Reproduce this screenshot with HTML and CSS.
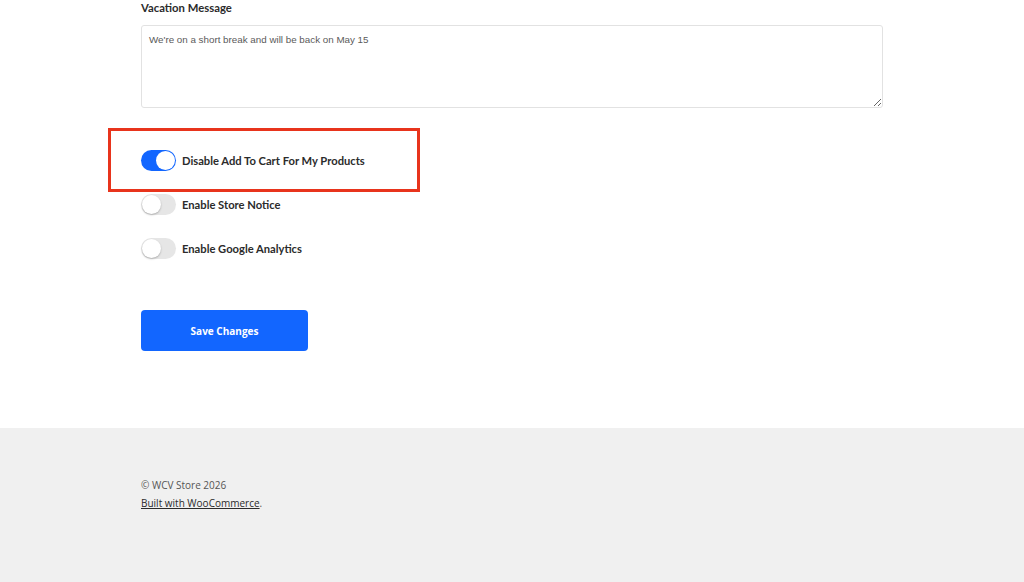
FILE: index.html
```html
<!DOCTYPE html>
<html lang="en">
<head>
  <meta charset="UTF-8">
  <meta name="viewport" content="width=device-width, initial-scale=1.0">
  <title>Store Settings</title>
  <link rel="stylesheet" href="styles.css">
</head>
<body>
  <main class="content">
    <form class="settings">
      <div class="field">
        <label for="vacationMessage">Vacation Message</label>
        <textarea id="vacationMessage">We're on a short break and will be back on May 15</textarea>
      </div>

      <div class="toggles">
        <div class="toggle-row highlighted">
          <label class="switch">
            <input type="checkbox" checked>
            <span class="slider"></span>
          </label>
          <span class="toggle-label">Disable Add To Cart For My Products</span>
          <span class="annotation"></span>
        </div>
        <div class="toggle-row">
          <label class="switch">
            <input type="checkbox">
            <span class="slider"></span>
          </label>
          <span class="toggle-label">Enable Store Notice</span>
        </div>
        <div class="toggle-row">
          <label class="switch">
            <input type="checkbox">
            <span class="slider"></span>
          </label>
          <span class="toggle-label">Enable Google Analytics</span>
        </div>
      </div>

      <button type="button" class="save-button">Save Changes</button>
    </form>
  </main>

  <footer class="site-footer">
    <p>&copy; WCV Store 2026</p>
    <p><a href="#">Built with WooCommerce</a>.</p>
  </footer>
</body>
</html>
```

FILE: styles.css
```css
:root {
  --text-color: #2b2b2b;
  --muted: #555;
  --border-color: #e2e2e2;
  --accent: #1266ff;
  --footer-bg: #f0f0f0;
  --mark: #e8341c;
}
body {
  margin: 0;
  padding: 0;
  font-family: Lato, "Noto Sans", sans-serif;
  color: var(--text-color);
  background: #fff;
}
.content {
  height: 428px;
  padding: 0 141px;
  box-sizing: border-box;
}
.settings {
  display: flex;
  flex-direction: column;
  align-items: flex-start;
}
.field {
  width: 742px;
}
.field label {
  display: block;
  font-size: 11.3px;
  font-weight: bold;
  line-height: 15px;
  margin-bottom: 10px;
}
textarea {
  display: block;
  width: 100%;
  height: 83px;
  box-sizing: border-box;
  padding: 8px 7px;
  border: 1px solid var(--border-color);
  border-radius: 3px;
  font-family: "Liberation Sans", Arial, sans-serif;
  font-size: 9.8px;
  color: #5a5a5a;
  resize: vertical;
}
.toggles {
  margin-top: 42px;
  display: flex;
  flex-direction: column;
  gap: 23px;
}
.toggle-row {
  position: relative;
  display: flex;
  align-items: center;
  gap: 6px;
  height: 21px;
}
.toggle-label {
  font-size: 11.2px;
  font-weight: bold;
  color: var(--text-color);
}
.switch {
  position: relative;
  display: inline-block;
  width: 35px;
  height: 21px;
}
.switch input {
  opacity: 0;
  width: 0;
  height: 0;
}
.slider {
  position: absolute;
  inset: 0;
  background: #e6e6e6;
  border-radius: 11px;
  cursor: pointer;
}
.slider::before {
  content: "";
  position: absolute;
  left: 1px;
  top: 1px;
  width: 19px;
  height: 19px;
  border-radius: 50%;
  background: #fff;
  box-shadow: 0 1px 2px rgba(0, 0, 0, 0.25);
}
.switch input:checked + .slider {
  background: var(--accent);
}
.switch input:checked + .slider::before {
  left: 15px;
  box-shadow: none;
}
.annotation {
  position: absolute;
  left: -33px;
  top: -22px;
  width: 312px;
  height: 64px;
  box-sizing: border-box;
  border: 3px solid var(--mark);
  pointer-events: none;
}
.save-button {
  margin-top: 51px;
  width: 167px;
  height: 41px;
  border: none;
  border-radius: 4px;
  background: var(--accent);
  color: #fff;
  font-family: "Open Sans", Lato, sans-serif;
  font-size: 10px;
  font-weight: bold;
  cursor: pointer;
}
.site-footer {
  background: var(--footer-bg);
  height: 154px;
  padding: 48px 141px 0;
  box-sizing: border-box;
  font-family: "Open Sans", sans-serif;
  font-size: 10px;
  color: var(--muted);
}
.site-footer p {
  margin: 0;
  line-height: 18px;
}
.site-footer a {
  color: var(--text-color);
}
```
